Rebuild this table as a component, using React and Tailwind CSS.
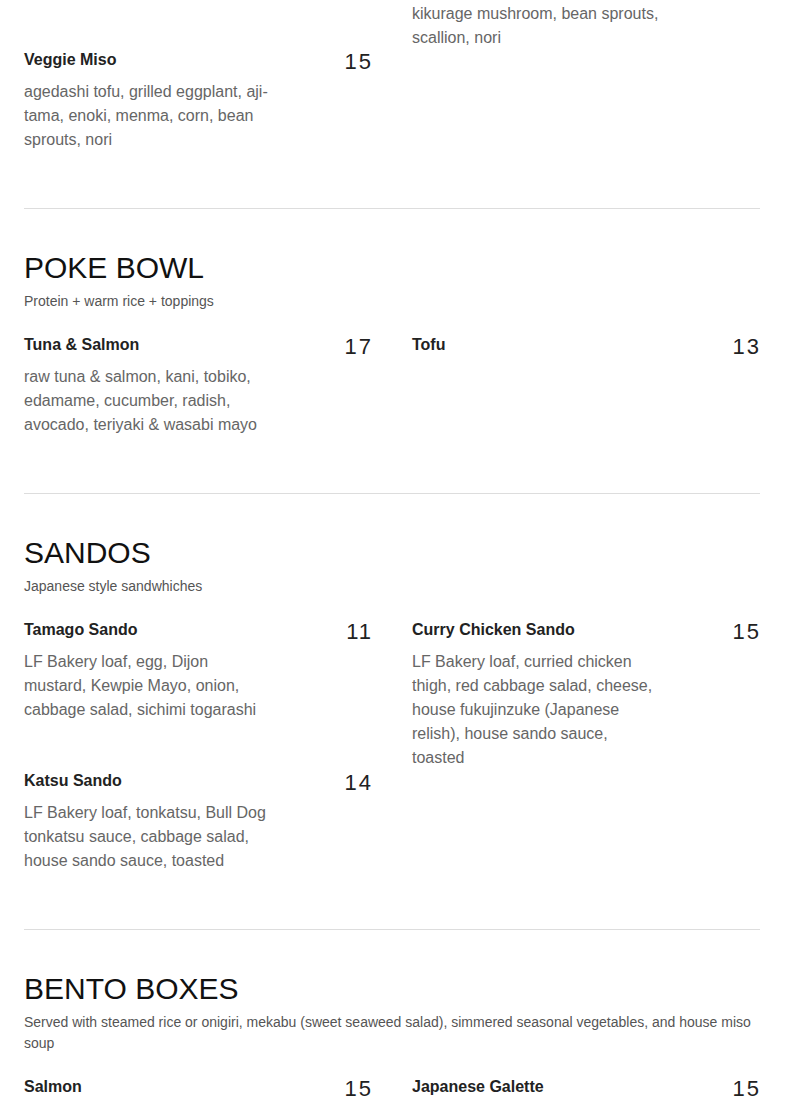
import React from "react";

const sections = [
  {
    title: "POKE BOWL",
    subtitle: "Protein + warm rice + toppings",
    left: [
      {
        name: "Tuna & Salmon",
        price: "17",
        desc: "raw tuna & salmon, kani, tobiko, edamame, cucumber, radish, avocado, teriyaki & wasabi mayo",
      },
    ],
    right: [{ name: "Tofu", price: "13", desc: "" }],
  },
  {
    title: "SANDOS",
    subtitle: "Japanese style sandwhiches",
    left: [
      {
        name: "Tamago Sando",
        price: "11",
        desc: "LF Bakery loaf, egg, Dijon mustard, Kewpie Mayo, onion, cabbage salad, sichimi togarashi",
      },
      {
        name: "Katsu Sando",
        price: "14",
        desc: "LF Bakery loaf, tonkatsu, Bull Dog tonkatsu sauce, cabbage salad, house sando sauce, toasted",
      },
    ],
    right: [
      {
        name: "Curry Chicken Sando",
        price: "15",
        desc: "LF Bakery loaf, curried chicken thigh, red cabbage salad, cheese, house fukujinzuke (Japanese relish), house sando sauce, toasted",
      },
    ],
  },
  {
    title: "BENTO BOXES",
    subtitle:
      "Served with steamed rice or onigiri, mekabu (sweet seaweed salad), simmered seasonal vegetables, and house miso soup",
    left: [{ name: "Salmon", price: "15", desc: "" }],
    right: [{ name: "Japanese Galette", price: "15", desc: "" }],
  },
];

function Item({ item }) {
  return (
    <div>
      <div className="flex h-7 items-start justify-between">
        <h3 className="text-[16px] font-bold leading-6 text-[#222]">
          {item.name}
        </h3>
        <span className="-mr-[1px] text-[22px] leading-7 tracking-[2px] text-[#222]">
          {item.price}
        </span>
      </div>
      {item.desc && (
        <p className="mt-1 w-[250px] text-[16px] leading-6 text-[#666]">
          {item.desc}
        </p>
      )}
    </div>
  );
}

function Column({ items }) {
  return (
    <div className="flex flex-col gap-[47px]">
      {items.map((item) => (
        <Item key={item.name} item={item} />
      ))}
    </div>
  );
}

export default function App() {
  return (
    <div className="min-h-screen bg-white font-['Liberation_Sans',Arial,sans-serif]">
      <div className="ml-6 w-[736px]">
        {/* tail of the section above, page is scrolled */}
        <section className="pb-14">
          <div className="grid grid-cols-2 gap-x-10">
            <div className="pt-12">
              <Item
                item={{
                  name: "Veggie Miso",
                  price: "15",
                  desc: "agedashi tofu, grilled eggplant, aji-tama, enoki, menma, corn, bean sprouts, nori",
                }}
              />
            </div>
            <div className="pt-[2px]">
              <p className="w-[250px] text-[16px] leading-6 text-[#666]">
                kikurage mushroom, bean sprouts, scallion, nori
              </p>
            </div>
          </div>
        </section>

        {sections.map((s) => (
          <section
            key={s.title}
            className="border-t border-[#dddddd] pb-14 pt-[41px]"
          >
            <h2 className="text-[30px] leading-9 text-[#111]">{s.title}</h2>
            <p className="mt-[5px] text-[14px] leading-[21px] text-[#555]">
              {s.subtitle}
            </p>
            <div className="mt-[21px] grid grid-cols-2 gap-x-10">
              <Column items={s.left} />
              <Column items={s.right} />
            </div>
          </section>
        ))}
      </div>
    </div>
  );
}
